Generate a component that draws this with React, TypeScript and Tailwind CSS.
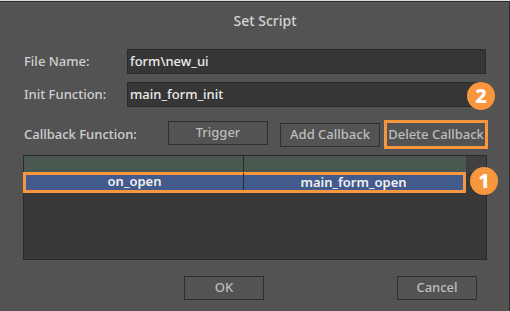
import React from "react";

const font = { fontFamily: '"Noto Sans", "Open Sans", sans-serif' };

function Badge({ n, className }: { n: string; className: string }) {
  return (
    <div
      className={`absolute w-[28px] h-[28px] rounded-full bg-[#f7963c] text-white text-[20px] font-extrabold leading-none flex items-center justify-center ${className}`}
    >
      {n}
    </div>
  );
}

function Btn({ label, className }: { label: string; className: string }) {
  return (
    <div
      className={`h-[24px] border border-[#2f2f2f] flex items-center justify-center text-[13px] font-medium text-[#bdbdbd] ${className}`}
    >
      {label}
    </div>
  );
}

export default function App() {
  return (
    <div className="w-[510px] h-[311px] bg-[#dcdcdc] pt-px" style={font}>
      <div className="relative h-[310px] bg-[#535353] border-t border-r border-[#2b2b2b] pl-[23px]">
        {/* title */}
        <div className="h-[36px] pt-[10px] text-center text-[14px] font-medium text-[#d4d4d4] pr-[2px] leading-[18px]">
          Set Script
        </div>

        {/* fields */}
        <div className="flex flex-col gap-[8px] mt-[11px]">
          <div className="flex items-center">
            <div className="w-[104px] pl-px text-[13px] font-medium text-[#cfcfcf]">File Name:</div>
            <div className="w-[359px] h-[25px] bg-[#363636] border border-[#2a2a2a] pl-[2px] flex items-center text-[13px] font-medium text-[#ececec]">
              form\new_ui
            </div>
          </div>
          <div className="flex items-center">
            <div className="w-[104px] pl-px text-[13px] font-medium text-[#cfcfcf]">Init Function:</div>
            <div className="w-[359px] h-[25px] bg-[#363636] border border-[#2a2a2a] pl-[2px] flex items-center text-[13px] font-medium text-[#ececec]">
              main_form_init
            </div>
          </div>
        </div>

        {/* callback row */}
        <div className="flex items-center mt-[13px] h-[29px]">
          <div className="w-[145px] pl-px text-[13px] font-medium text-[#cfcfcf]">Callback Function:</div>
          <Btn label="Trigger" className="w-[100px] -mt-[4px]" />
          <Btn label="Add Callback" className="w-[100px] ml-[12px]" />
          <div className="w-[104px] h-[29px] ml-[4px] border-[3px] border-[#f7963c] flex items-center justify-center text-[13px] font-medium text-[#bdbdbd]">
            Delete Callback
          </div>
        </div>

        {/* table */}
        <div className="mt-[6px] w-[464px] h-[105px] bg-[#383838] border border-[#2a2a2a] flex">
          <div className="w-[442px] flex flex-col">
            <div className="h-[16px] bg-[#4a5850] flex">
              <div className="w-[220px] border-r border-[#2a2a2a]" />
              <div className="flex-1" />
            </div>
            <div className="h-[21px] border-[3px] border-[#f7963c] bg-[#435a8c] flex text-[13px] font-semibold text-[#f0f0f0] -ml-px">
              <div className="w-[218px] border-r border-[#2a2a2a] flex items-center justify-center leading-none -mt-[2px]">
                on_open
              </div>
              <div className="flex-1 flex items-center justify-center leading-none">main_form_open</div>
            </div>
          </div>
          <div className="flex-1 h-[16px] bg-[#404040]" />
        </div>

        {/* dialog buttons */}
        <div className="flex mt-[16px]">
          <Btn label="OK" className="w-[80px] ml-[161px]" />
          <Btn label="Cancel" className="w-[80px] ml-[133px]" />
        </div>

        <Badge n="2" className="left-[467px] top-[80px]" />
        <Badge n="1" className="left-[470px] top-[165px]" />
      </div>
    </div>
  );
}
